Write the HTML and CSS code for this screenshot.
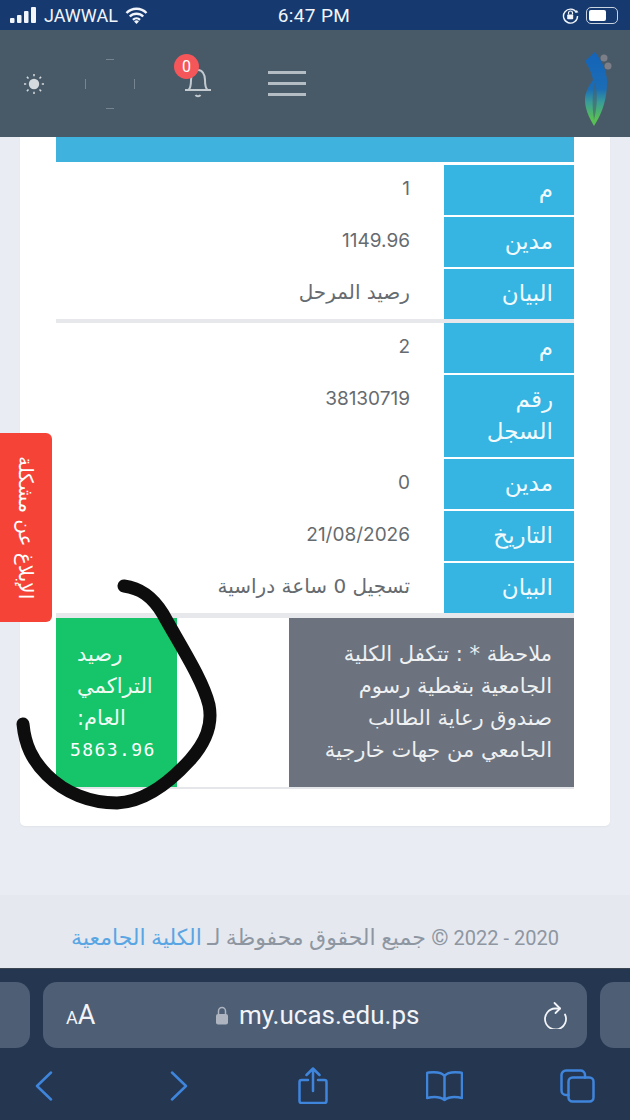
FILE: index.html
```html
<!DOCTYPE html>
<html lang="ar">
<head>
  <meta charset="UTF-8">
  <meta name="viewport" content="width=device-width, initial-scale=1.0">
  <title>my.ucas.edu.ps</title>
  <link rel="stylesheet" href="styles.css">
</head>
<body>
  <div class="page">
    <div class="status-bar">
      <div class="status-left">
        <svg width="27" height="16" viewBox="0 0 27 16"><rect x="0" y="11" width="4.5" height="5" rx="1"/><rect x="7" y="8" width="4.5" height="8" rx="1"/><rect x="14" y="4" width="4.5" height="12" rx="1"/><rect x="21" y="0" width="5" height="16" rx="1"/></svg>
        <span>JAWWAL</span>
        <svg width="23" height="17" viewBox="0 0 23 17"><path d="M1.5 6a14 14 0 0 1 20 0M4.8 9.5a9.5 9.5 0 0 1 13.4 0M8 12.8a5 5 0 0 1 7 0" fill="none" stroke="#f2f5f9" stroke-width="2.4"/><path d="M11.5 17l-2.4-2.6a3.4 3.4 0 0 1 4.8 0z"/></svg>
      </div>
      <div class="status-time">6:47 PM</div>
      <div class="status-right">
        <svg width="17" height="17" viewBox="0 0 17 17"><path d="M14.5 5.5A7 7 0 1 0 15.5 9" fill="none" stroke="#f2f5f9" stroke-width="1.4"/><path d="M12.8 5.5h3.6l-1.6-2.6z"/><rect x="5.2" y="7.5" width="6" height="4.8" rx=".8"/><path d="M6.5 7.5V6a2 2 0 0 1 4 0v1.5" fill="none" stroke="#f2f5f9" stroke-width="1.2"/></svg>
        <div class="battery"><div class="battery-level"></div></div>
      </div>
    </div>

    <header class="site-header">
      <div class="header-tools">
        <svg class="sun" width="20" height="20" viewBox="0 0 20 20"><circle cx="10" cy="10" r="5.2" fill="#d5dade"/><path d="M10 0v2.2M10 17.8V20M0 10h2.2M17.800 10H20M2.900 2.900l1.600 1.600M15.500 15.500l1.600 1.600M2.900 17.100l1.600-1.600M15.500 4.500l1.600-1.600" stroke="#d5dade" stroke-width="1.500"/></svg>
        <svg class="spinner" width="50" height="50" viewBox="0 0 50 50"><path d="M21 .5h8M21 49.500h8M.5 20v10M49.500 20v10" stroke="#76858f" stroke-width="1"/></svg>
        <div class="bell">
          <svg width="30" height="31" viewBox="0 0 30 31"><path d="M2 22h26M5.500 22c2.500-2.500 2.500-6 2.500-10 0-6 3-10 7-10s7 4 7 10c0 4 0 7.500 2.500 10" fill="none" stroke="#c4cbd0" stroke-width="2"/><path d="M12.500 27c1 1.500 4 1.500 5 0" fill="none" stroke="#c4cbd0" stroke-width="2"/></svg>
          <span class="badge">0</span>
        </div>
        <div class="burger"><span></span><span></span><span></span></div>
      </div>
      <svg class="logo" width="28" height="74" viewBox="0 0 28 74">
        <defs>
          <linearGradient id="logo-fill" x1="0" y1="0" x2="0" y2="1">
            <stop offset="0" stop-color="#1463b8"/>
            <stop offset=".5" stop-color="#1b6db6"/>
            <stop offset=".68" stop-color="#3a9c98"/>
            <stop offset=".9" stop-color="#57bf55"/>
          </linearGradient>
        </defs>
        <path d="M1 9L11 0c6 8 12 18 12 30 0 16-4 30-13 44C4 64 1 56 1 48c0-8 4-14 8-20-1-6-4-13-8-19z" fill="url(#logo-fill)"/>
        <path d="M11 30c-3 10-3 25-1 38 3-13 4-26 1-38z" fill="#48606b" opacity=".6"/>
        <circle cx="20" cy="6" r="3.500" fill="#7d7f88"/>
        <circle cx="24" cy="14" r="3.500" fill="#7d7f88"/>
      </svg>
    </header>

    <main class="content" dir="rtl">
      <div class="card">
        <div class="table-top"></div>

        <div class="record">
          <div class="row"><div class="label">م</div><div class="value num">1</div></div>
          <div class="row"><div class="label">مدين</div><div class="value num">1149.96</div></div>
          <div class="row"><div class="label">البيان</div><div class="value">رصيد المرحل</div></div>
        </div>

        <div class="record">
          <div class="row"><div class="label">م</div><div class="value num">2</div></div>
          <div class="row"><div class="label">رقم<br>السجل</div><div class="value num">38130719</div></div>
          <div class="row"><div class="label">مدين</div><div class="value num">0</div></div>
          <div class="row"><div class="label">التاريخ</div><div class="value num">21/08/2026</div></div>
          <div class="row"><div class="label">البيان</div><div class="value">تسجيل 0 ساعة دراسية</div></div>
        </div>

        <div class="summary">
          <div class="note">ملاحظة * : تتكفل الكلية<br>الجامعية بتغطية رسوم<br>صندوق رعاية الطالب<br>الجامعي من جهات خارجية</div>
          <div class="balance">رصيد<br>التراكمي<br>العام:<span class="balance-num">5863.96</span></div>
        </div>
      </div>
    </main>

    <footer class="site-footer" dir="rtl">2020 - 2022 <span class="footer-text">© جميع الحقوق محفوظة لـ <a href="#">الكلية الجامعية</a></span></footer>

    <div class="browser-bar">
      <div class="url-row">
        <div class="url-tab url-tab-left"></div>
        <div class="url-box">
          <span class="aa"><small>A</small>A</span>
          <span class="url">
            <svg width="14" height="19" viewBox="0 0 14 19"><path d="M3.500 8V5a3.500 3.500 0 0 1 7 0v3" fill="none" stroke="#aeb5c1" stroke-width="1.500"/><rect x="1" y="8" width="12" height="10.500" rx="2" fill="#aeb5c1"/></svg>
            my.ucas.edu.ps
          </span>
          <svg width="24" height="28" viewBox="0 0 24 28"><path d="M17 7.500h-5A10.500 10.500 0 1 0 22 13.500" fill="none" stroke="#f2f4f8" stroke-width="1.800" stroke-linecap="round"/><path d="M11.500 2L17 7.500 12.500 12" fill="none" stroke="#f2f4f8" stroke-width="1.800" stroke-linecap="round" stroke-linejoin="round"/></svg>
        </div>
        <div class="url-tab url-tab-right"></div>
      </div>
      <nav class="toolbar">
        <svg width="18" height="30" viewBox="0 0 18 30"><path d="M16 1.500L2 15l14 13.500" class="tool-line"/></svg>
        <svg width="18" height="30" viewBox="0 0 18 30"><path d="M2 1.500L16 15 2 28.500" class="tool-line"/></svg>
        <svg width="30" height="37" viewBox="0 0 30 37"><path d="M10 13H3.500a2 2 0 0 0-2 2v19a2 2 0 0 0 2 2h23a2 2 0 0 0 2-2V15a2 2 0 0 0-2-2H20M15 24V1.500M8.500 8L15 1.500 21.500 8" class="tool-line"/></svg>
        <svg width="37" height="32" viewBox="0 0 37 32"><path d="M18.500 6C16 2.500 11 1.500 2.500 2.500 1.500 2.500 1 3 1 4v24c6-1.500 13-1.500 17.500 2 4.500-3.500 11.500-3.500 17.500-2V4c0-1-.5-1.500-1.500-1.500C26 1.500 21 2.500 18.500 6zM18.500 6v24" class="tool-line"/></svg>
        <svg width="35" height="34" viewBox="0 0 35 34"><rect x="8.500" y="8.500" width="25" height="24" rx="4" class="tool-line"/><path d="M8.500 26H6a4.500 4.500 0 0 1-4.500-4.500V6A4.500 4.500 0 0 1 6 1.500h14A4.500 4.500 0 0 1 25 6v2.500" class="tool-line"/></svg>
      </nav>
    </div>

    <button class="report-tab" dir="rtl">الإبلاغ عن مشكلة</button>

    <svg class="scribble" width="630" height="1120" viewBox="0 0 630 1120">
      <path d="M124 586C140 588 152 596 163 614C180 645 203 680 209 705C213 725 206 742 190 760C170 782 145 802 117 803C90 803 65 793 47 775C32 760 25 745 23 724" class="scribble-line"/>
    </svg>
  </div>
</body>
</html>
```
FILE: styles.css
```css
* {
  box-sizing: border-box;
}
body {
  margin: 0;
  font-family: "DejaVu Sans", sans-serif;
  background: #e9ecf2;
}
.page {
  position: relative;
  width: 630px;
  height: 1120px;
  overflow: hidden;
  display: flex;
  flex-direction: column;
}

/* phone status bar */
.status-bar {
  height: 30px;
  background: #163a70;
  color: #f2f5f9;
  fill: #f2f5f9;
  display: flex;
  align-items: center;
  justify-content: space-between;
  padding: 0 12px 0 10px;
  font-family: Roboto, "Liberation Sans", sans-serif;
  font-size: 18px;
}
.status-left {
  width: 200px;
  display: flex;
  align-items: center;
  gap: 7px;
}
.status-time {
  font-size: 19px;
  letter-spacing: .4px;
}
.status-right {
  width: 200px;
  display: flex;
  align-items: center;
  justify-content: flex-end;
  gap: 7px;
}
.battery {
  width: 32px;
  height: 17px;
  border: 1px solid #c9d2df;
  border-radius: 5px;
  padding: 2px;
}
.battery-level {
  width: 17px;
  height: 100%;
  background: #fff;
  border-radius: 2px;
}

/* site header */
.site-header {
  height: 107px;
  background: #485a67;
  display: flex;
  align-items: center;
  justify-content: space-between;
  padding: 0 18px 0 24px;
}
.header-tools {
  display: flex;
  align-items: center;
}
.sun {
  margin-right: 41px;
}
.spinner {
  margin-right: 48px;
}
.bell {
  position: relative;
  width: 30px;
  height: 31px;
  margin-right: 55px;
}
.badge {
  position: absolute;
  left: -9px;
  top: -14px;
  width: 25px;
  height: 25px;
  border-radius: 50%;
  background: #f5565a;
  color: #fff;
  font-family: Roboto, sans-serif;
  font-size: 16px;
  line-height: 25px;
  text-align: center;
}
.burger {
  width: 38px;
  display: flex;
  flex-direction: column;
  gap: 8px;
}
.burger span {
  height: 3px;
  background: #b4bcc4;
}
.logo {
  margin-top: 11px;
}

/* main card */
.content {
  flex: 1;
  padding: 0 20px;
}
.card {
  height: 689px;
  background: #fff;
  border-radius: 0 0 5px 5px;
  padding: 0 36px;
  box-shadow: 0 1px 2px rgba(0,0,0,0.04);
}
.table-top {
  height: 25px;
  background: #3fb2dd;
  margin-bottom: 3px;
}
.record {
  display: flex;
  flex-direction: column;
  gap: 2px;
  border-bottom: 4px solid #e6e8ec;
}
.record + .record {
  border-bottom-width: 5px;
}
.row {
  display: flex;
  min-height: 50px;
}
.label {
  width: 130px;
  background: #36b4e2;
  color: #f1fafd;
  font-size: 23px;
  line-height: 32px;
  padding: 8px 21px 10px 0;
}
.value {
  flex: 1;
  color: #666b70;
  font-size: 20px;
  line-height: 32px;
  padding: 7px 34px 0 0;
}
.value.num {
  font-family: Inter, Roboto, sans-serif;
  font-size: 19px;
  padding-top: 8px;
}
.summary {
  display: flex;
  justify-content: space-between;
  border-bottom: 2px solid #e4e6ea;
  height: 171px;
}
.note {
  width: 285px;
  height: 169px;
  background: #6c737e;
  color: #eef0f2;
  font-size: 21px;
  line-height: 32px;
  padding: 20px 22px 0 0;
  white-space: nowrap;
}
.balance {
  width: 121px;
  height: 169px;
  background: #16c46a;
  color: #eefbf3;
  font-size: 21px;
  line-height: 32px;
  padding: 20px 0 0 21px;
  text-align: left;
  white-space: nowrap;
}
.balance-num {
  display: block;
  margin-left: -7px;
  color: #fff;
  font-family: "DejaVu Sans Mono", "Liberation Mono", monospace;
  font-size: 18px;
  letter-spacing: 1.400px;
}

/* footer */
.site-footer {
  height: 73px;
  background: #e5e8ef;
  color: #8e96a1;
  font-family: Roboto, "DejaVu Sans", sans-serif;
  font-size: 20px;
  line-height: 86px;
  text-align: center;
  white-space: nowrap;
}
.footer-text {
  font-size: 22px;
}
.site-footer a {
  color: #5aa5e3;
  text-decoration: none;
}

/* safari bottom bar */
.browser-bar {
  height: 152px;
  background: #243650;
  border-top: 1px solid #3c4653;
  padding-top: 13px;
}
.url-row {
  display: flex;
  justify-content: space-between;
  gap: 13px;
}
.url-tab {
  width: 30px;
  height: 66px;
  background: #4d5e75;
}
.url-tab-left {
  border-radius: 0 14px 14px 0;
}
.url-tab-right {
  border-radius: 14px 0 0 14px;
}
.url-box {
  flex: 1;
  height: 66px;
  background: #4d5e75;
  border-radius: 14px;
  color: #f2f4f8;
  display: flex;
  align-items: center;
  justify-content: space-between;
  padding: 0 20px 0 23px;
  font-family: Roboto, "Liberation Sans", sans-serif;
}
.aa {
  font-size: 27px;
}
.aa small {
  font-size: 18px;
}
.url {
  display: flex;
  align-items: center;
  gap: 10px;
  margin-right: 4px;
  font-size: 26px;
}
.toolbar {
  display: grid;
  grid-template-columns: 134px 136px 131px 133px 133px;
  justify-items: center;
  align-items: center;
  width: 667px;
  margin-left: -23px;
  padding-top: 19px;
}
.tool-line {
  fill: none;
  stroke: #3f85dc;
  stroke-width: 2.500;
  stroke-linecap: round;
  stroke-linejoin: round;
}

/* floating bits */
.report-tab {
  position: absolute;
  left: 0;
  top: 433px;
  width: 52px;
  height: 189px;
  background: #f54337;
  color: #fff;
  border: none;
  border-radius: 0 6px 6px 0;
  font-family: "DejaVu Sans", sans-serif;
  font-size: 20px;
  padding: 0;
  writing-mode: vertical-rl;
  text-align: center;
}
.scribble {
  position: absolute;
  left: 0;
  top: 0;
  pointer-events: none;
}
.scribble-line {
  fill: none;
  stroke: #0d0d0d;
  stroke-width: 13;
  stroke-linecap: round;
  stroke-linejoin: round;
}
```
